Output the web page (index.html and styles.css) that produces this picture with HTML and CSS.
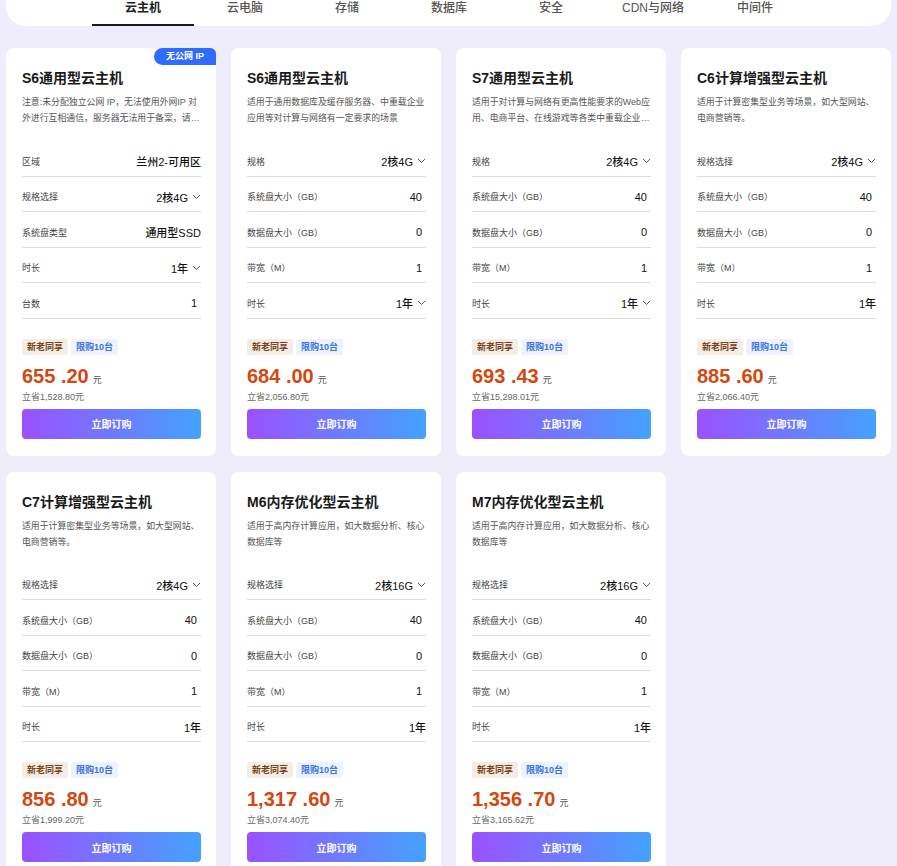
FILE: index.html
```html
<!DOCTYPE html>
<html lang="zh-CN">
<head>
    <meta charset="UTF-8">
    <meta name="viewport" content="width=device-width, initial-scale=1.0">
    <title>云主机</title>
    <link rel="stylesheet" href="styles.css">
</head>
<body>
    <nav class="tabs">
        <a class="tab active">云主机</a>
        <a class="tab">云电脑</a>
        <a class="tab">存储</a>
        <a class="tab">数据库</a>
        <a class="tab">安全</a>
        <a class="tab">CDN与网络</a>
        <a class="tab">中间件</a>
    </nav>

    <div class="card-grid" id="card-grid"></div>

    <script>
        const chevron = '<svg class="chevron" width="9" height="6" viewBox="0 0 9 6"><path d="M1 1l3.5 3.5L8 1" fill="none" stroke="#555" stroke-width="1"/></svg>';

        const descCompute = "适用于计算密集型业务等场景，如大型网站、电商营销等。";
        const descMemory = "适用于高内存计算应用，如大数据分析、核心数据库等";

        function diskRows(spec, specLabel, durationSelect) {
            return [
                [specLabel, spec, true],
                ["系统盘大小（GB）", "40"],
                ["数据盘大小（GB）", "0"],
                ["带宽（M）", "1"],
                ["时长", "1年", durationSelect]
            ];
        }

        const products = [
            {
                name: "S6通用型云主机",
                badge: "无公网 IP",
                desc: "注意:未分配独立公网 IP，无法使用外网IP 对外进行互相通信，服务器无法用于备案，请谨慎购买。",
                rows: [
                    ["区域", "兰州2-可用区"],
                    ["规格选择", "2核4G", true],
                    ["系统盘类型", "通用型SSD"],
                    ["时长", "1年", true],
                    ["台数", "1"]
                ],
                price: ["655", ".20"], save: "1,528.80"
            },
            {
                name: "S6通用型云主机",
                desc: "适用于通用数据库及缓存服务器、中重载企业应用等对计算与网络有一定要求的场景",
                rows: diskRows("2核4G", "规格", true),
                price: ["684", ".00"], save: "2,056.80"
            },
            {
                name: "S7通用型云主机",
                desc: "适用于对计算与网络有更高性能要求的Web应用、电商平台、在线游戏等各类中重载企业级应用",
                rows: diskRows("2核4G", "规格", true),
                price: ["693", ".43"], save: "15,298.01"
            },
            {
                name: "C6计算增强型云主机",
                desc: descCompute,
                rows: diskRows("2核4G", "规格选择", false),
                price: ["885", ".60"], save: "2,066.40"
            },
            {
                name: "C7计算增强型云主机",
                desc: descCompute,
                rows: diskRows("2核4G", "规格选择", false),
                price: ["856", ".80"], save: "1,999.20"
            },
            {
                name: "M6内存优化型云主机",
                desc: descMemory,
                rows: diskRows("2核16G", "规格选择", false),
                price: ["1,317", ".60"], save: "3,074.40"
            },
            {
                name: "M7内存优化型云主机",
                desc: descMemory,
                rows: diskRows("2核16G", "规格选择", false),
                price: ["1,356", ".70"], save: "3,165.62"
            }
        ];

        const grid = document.getElementById("card-grid");

        products.forEach(p => {
            const card = document.createElement("div");
            card.className = "card";

            const rows = p.rows.map(([label, value, select]) => {
                const plain = /^\d+$/.test(value) ? " num" : "";
                return `
                    <div class="spec-row">
                        <span class="spec-label">${label}</span>
                        <span class="spec-value${plain}">${value}${select ? chevron : ""}</span>
                    </div>`;
            }).join("");

            card.innerHTML = `
                ${p.badge ? `<span class="badge">${p.badge}</span>` : ""}
                <h3 class="card-title">${p.name}</h3>
                <p class="card-desc">${p.desc}</p>
                <div class="spec-list">${rows}</div>
                <div class="tags">
                    <span class="tag tag-share">新老同享</span>
                    <span class="tag tag-limit">限购10台</span>
                </div>
                <div class="price">${p.price[0]} ${p.price[1]}<span class="unit">元</span></div>
                <div class="save">立省${p.save}元</div>
                <button class="buy-btn">立即订购</button>
            `;
            grid.appendChild(card);
        });
    </script>
</body>
</html>
```

FILE: styles.css
```css
* {
    margin: 0;
    padding: 0;
    box-sizing: border-box;
}

body {
    font-family: "Liberation Sans", "Noto Sans CJK SC", sans-serif;
    background-color: #eeedf9;
    color: #222;
    padding: 0 6px 20px;
}

/* Top tabs */
.tabs {
    display: flex;
    height: 26px;
    padding-left: 86px;
    background: #fff;
    border-radius: 0 0 20px 20px;
    margin-bottom: 22px;
}

.tab {
    width: 102px;
    text-align: center;
    font-size: 12px;
    line-height: 17px;
    color: #555;
    font-weight: 500;
    border-bottom: 2px solid transparent;
    height: 26px;
}

.tab.active {
    color: #222;
    font-weight: bold;
    border-bottom-color: #1a1a1a;
}

/* Cards */
.card-grid {
    display: grid;
    grid-template-columns: repeat(4, 1fr);
    gap: 16px 15px;
}

.card {
    position: relative;
    background: #fff;
    border-radius: 8px;
    padding: 20px 15px 17px 16px;
    display: flex;
    flex-direction: column;
}

.badge {
    position: absolute;
    top: 0;
    right: 0;
    width: 62px;
    height: 17px;
    line-height: 17px;
    text-align: center;
    background: #2f6bff;
    color: #fff;
    font-size: 9px;
    font-weight: bold;
    border-radius: 12px 8px 0 12px;
}

.card-title {
    font-size: 14px;
    line-height: 20px;
    font-weight: bold;
    color: #1a1a1a;
    margin-bottom: 6px;
}

.card-desc {
    font-size: 8.9px;
    line-height: 16px;
    height: 32px;
    color: #555;
    display: -webkit-box;
    -webkit-line-clamp: 2;
    -webkit-box-orient: vertical;
    overflow: hidden;
    margin-bottom: 15px;
}

.spec-row {
    display: flex;
    justify-content: space-between;
    align-items: center;
    height: 35.5px;
    padding-top: 6px;
    border-bottom: 1px solid #dcdcdc;
}

.spec-label {
    font-size: 9px;
    color: #444;
}

.spec-value {
    display: flex;
    align-items: center;
    font-size: 11px;
    font-weight: 500;
    color: #111;
}

.spec-value.num {
    padding-right: 4px;
}

.chevron {
    margin-left: 4px;
}

.tags {
    display: flex;
    gap: 3px;
    margin-top: 20px;
}

.tag {
    font-size: 9px;
    font-weight: bold;
    line-height: 16px;
    padding: 0 5px;
    border-radius: 2px;
}

.tag-share {
    background: #f3ede6;
    color: #7b3f16;
}

.tag-limit {
    background: #edf2fc;
    color: #3a73e6;
}

.price {
    margin-top: 9px;
    font-size: 20px;
    line-height: 24px;
    font-weight: bold;
    color: #d4470f;
}

.unit {
    font-size: 9px;
    font-weight: normal;
    color: #555;
    margin-left: 4px;
}

.save {
    font-size: 9px;
    line-height: 12px;
    color: #666;
    margin-top: -1px;
}

.buy-btn {
    margin-top: 6px;
    height: 30px;
    border: none;
    border-radius: 4px;
    background: linear-gradient(90deg, #9b51ff, #44a2ff);
    color: #fff;
    font-family: inherit;
    font-size: 10px;
    font-weight: bold;
    cursor: pointer;
}
```
